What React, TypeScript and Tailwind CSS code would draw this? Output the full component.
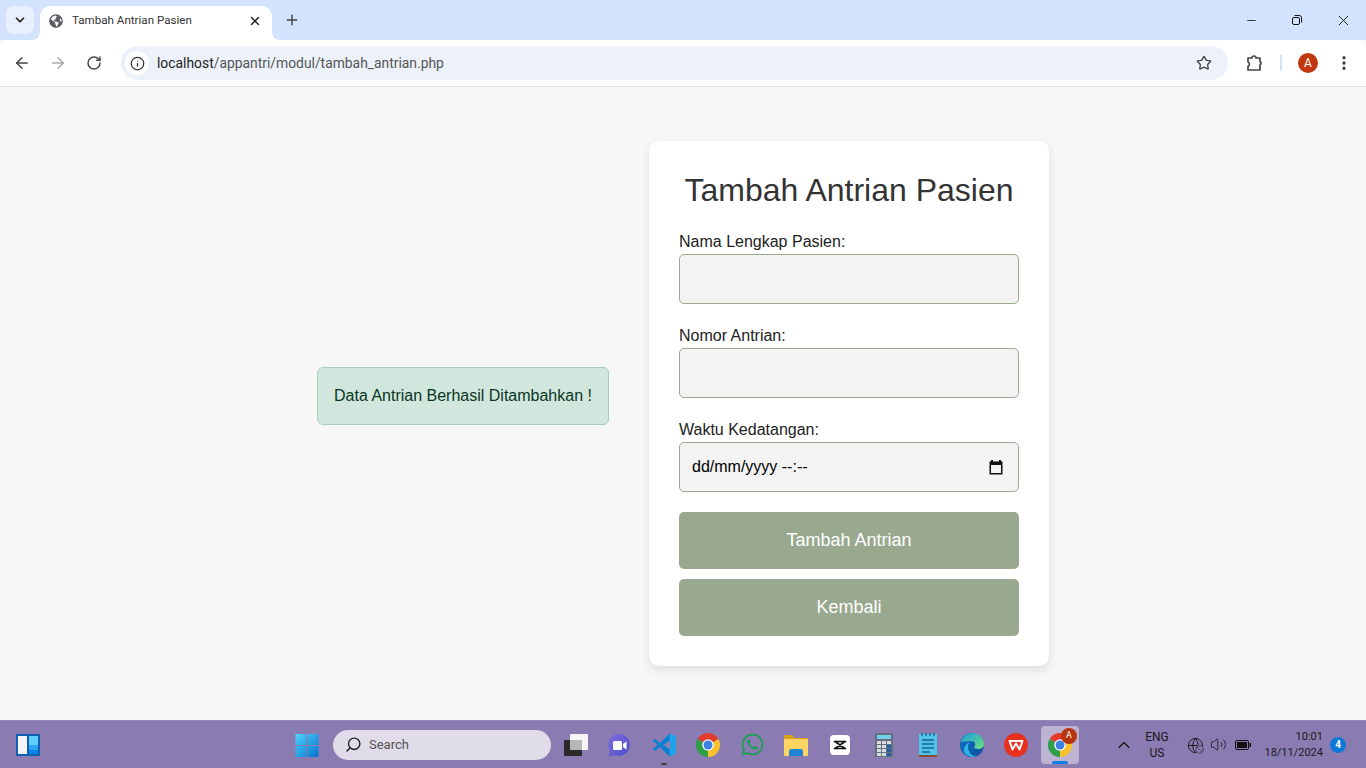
import React from 'react';
import { ArrowLeft, ArrowRight, RotateCw, Star, X, Plus, ChevronDown, ChevronUp, EllipsisVertical, Info, Minus, Volume2, Search, Globe, Ban } from 'lucide-react';
import { FaGlobeAmericas, FaWhatsapp } from 'react-icons/fa';

const uiFont = 'font-["Roboto",sans-serif]';

const ChromeIcon: React.FC = () => (
  <svg width="24" height="24" viewBox="0 0 24 24">
    <path d="M12 12 L1.6 6 A12 12 0 0 1 22.4 6 Z" fill="#e33b2e" />
    <path d="M12 12 L22.4 6 A12 12 0 0 1 12 24 Z" fill="#fbc02d" />
    <path d="M12 12 L12 24 A12 12 0 0 1 1.6 6 Z" fill="#2f9e48" />
    <circle cx="12" cy="12" r="5.8" fill="#fff" />
    <circle cx="12" cy="12" r="4.5" fill="#3b82e6" />
  </svg>
);

const WindowsLogo: React.FC = () => (
  <svg width="24" height="24" viewBox="0 0 24 24">
    <defs>
      <linearGradient id="winGrad" x1="0" y1="0" x2="1" y2="1">
        <stop offset="0" stopColor="#4fd2fb" />
        <stop offset="1" stopColor="#0573d0" />
      </linearGradient>
    </defs>
    <path d="M0.5 1h11v11h-11zM12.500 1h11v11h-11zM0.500 13h11v11h-11zM12.500 13h11v11h-11z" fill="url(#winGrad)" />
  </svg>
);

const WidgetsIcon: React.FC = () => (
  <svg width="24" height="22" viewBox="0 0 24 22">
    <rect width="24" height="22" fill="#0f5fb0" />
    <rect x="2" y="2" width="9" height="18" fill="#f4f4f4" />
    <rect x="13" y="2" width="9" height="9" fill="#5fcdfd" />
    <rect x="13" y="11" width="9" height="5" fill="#2aa5f5" />
    <rect x="13" y="16" width="9" height="4" fill="#0a84ea" />
  </svg>
);

const TaskViewIcon: React.FC = () => (
  <svg width="24" height="22" viewBox="0 0 24 22">
    <rect x="6" y="0" width="18" height="16" rx="1" fill="#f5f5f5" />
    <rect x="0" y="6" width="18" height="16" rx="1" fill="#2a2a2a" />
    <rect x="6" y="6" width="12" height="10" fill="#b9b6b8" />
  </svg>
);

const MeetIcon: React.FC = () => (
  <svg width="24" height="24" viewBox="2 0 24 24">
    <defs>
      <linearGradient id="meetGrad" x1="0" y1="0" x2="1" y2="1">
        <stop offset="0" stopColor="#7b6be0" />
        <stop offset="1" stopColor="#4f4fc4" />
      </linearGradient>
    </defs>
    <path d="M13 1a11 11 0 1 1-4.500 21l-6 1.500 1.500-5.500A11 11 0 0 1 13 1z" fill="url(#meetGrad)" />
    <rect x="7" y="8" width="9" height="9" rx="1.500" fill="#fff" />
    <path d="M17 11l3.500-2.500v8L17 14z" fill="#fff" />
  </svg>
);

const VsCodeIcon: React.FC = () => (
  <svg width="24" height="24" viewBox="0 0 24 24">
    <path d="M17.500 0.500L8 10 3 6 0.500 7.500 5.500 12 0.500 16.500 3 18l5-4 9.500 9.500L24 20.500V3.500z" fill="#0a7fd0" />
    <path d="M17.500 0.500L24 3.500v17l-6.500 3z" fill="#21a3ea" />
    <path d="M18 7.500L11.500 12l6.500 4.500z" fill="#8f80b4" />
  </svg>
);

const FilesIcon: React.FC = () => (
  <svg width="24" height="22" viewBox="0 0 24 22">
    <path d="M0 2a1 1 0 0 1 1-1h7l3 3h12a1 1 0 0 1 1 1v3H0z" fill="#d9a21b" />
    <path d="M0 5h24v16a1 1 0 0 1-1 1H1a1 1 0 0 1-1-1z" fill="#fcd462" />
    <path d="M5 17a2 2 0 0 1 2-2h10a2 2 0 0 1 2 2v5H5z" fill="#1f84d6" />
  </svg>
);

const CapCutIcon: React.FC = () => (
  <svg width="20" height="20" viewBox="0 0 20 20">
    <rect width="20" height="20" rx="4" fill="#fff" />
    <path d="M4.500 6.500h11M4.500 13.500h11M5 6.500l10 7M15 6.500l-10 7" stroke="#111" strokeWidth="1.700" strokeLinecap="round" fill="none" />
  </svg>
);

const CalcIcon: React.FC = () => (
  <svg width="18" height="24" viewBox="0 0 18 24">
    <rect width="18" height="24" rx="1" fill="#65707c" />
    <rect x="2" y="2" width="14" height="4" fill="#6fd0ee" />
    {[0, 1, 2].map(c => [0, 1, 2, 3].map(r => (
      <rect key={`${c}-${r}`} x={2 + c * 5} y={8 + r * 4} width="4" height="3" fill={c === 2 && r > 0 ? '#1d5fa8' : '#d9dde0'} />
    )))}
  </svg>
);

const NotepadIcon: React.FC = () => (
  <svg width="18" height="24" viewBox="0 0 18 24">
    <rect y="1" width="18" height="21" fill="#52c3e8" />
    <rect y="22" width="18" height="2" fill="#8a4b2a" />
    <path d="M3 0v3M7 0v3M11 0v3M15 0v3" stroke="#1c6f97" strokeWidth="1.500" />
    <path d="M3 7h12M3 11h12M3 15h12M3 19h8" stroke="#14698f" strokeWidth="1.500" />
  </svg>
);

const EdgeIcon: React.FC = () => (
  <svg width="24" height="24" viewBox="0 0 24 24">
    <defs>
      <linearGradient id="edgeTop" x1="0" y1="0" x2="1" y2="1">
        <stop offset="0" stopColor="#1b9de2" />
        <stop offset="1" stopColor="#6ee07a" />
      </linearGradient>
      <linearGradient id="edgeBot" x1="0" y1="0" x2="1" y2="1">
        <stop offset="0" stopColor="#0e6fc4" />
        <stop offset="1" stopColor="#0b4e9e" />
      </linearGradient>
    </defs>
    <circle cx="12" cy="12" r="12" fill="url(#edgeBot)" />
    <path d="M1 9C3 3 8 0 12 0c7 0 12 5 12 11 0 4-3 5-6 5-2 0-4-1-4-2 2-1 2-6-3-6-4 0-7 1-10 1z" fill="url(#edgeTop)" />
    <path d="M11 9c-3 1-4 5-2 9 1 3 4 5 8 5-5 2-11 0-13-4-1-4 2-9 7-10z" fill="#2bb3e6" />
  </svg>
);

const WpsIcon: React.FC = () => (
  <svg width="24" height="24" viewBox="0 0 24 24">
    <circle cx="12" cy="12" r="12" fill="#e8301e" />
    <path d="M5.500 8h13l-3 8.500-3.500-6-3.500 6z" fill="none" stroke="#fff" strokeWidth="2" strokeLinejoin="round" />
  </svg>
);

const BatteryIcon: React.FC = () => (
  <svg width="16" height="10" viewBox="0 0 16 10">
    <rect x="0.500" y="0.500" width="13" height="9" rx="1.500" fill="none" stroke="#111" />
    <rect x="2" y="2" width="10" height="6" fill="#111" />
    <rect x="14.500" y="3" width="1.500" height="4" fill="#111" />
  </svg>
);

const ExtensionIcon: React.FC = () => (
  <svg width="18" height="18" viewBox="0 0 18 18" fill="none" stroke="#444" strokeWidth="1.700" strokeLinejoin="round">
    <path d="M2 4h4a2 2 0 0 1 4 0h4v3.500a2 2 0 0 1 0 3.500V16H2v-3.500a2.500 2.500 0 0 0 0-4.500z" />
  </svg>
);

const TaskSlot: React.FC<{ children: React.ReactNode; underline?: boolean }> = ({ children, underline }) => (
  <div className="relative flex h-full w-[44px] items-center justify-center">
    {children}
    {underline && <span className="absolute bottom-[3px] h-[2px] w-[6px] rounded-full bg-[#444]" />}
  </div>
);

const Field: React.FC<{ label: string; gap: string; children?: React.ReactNode }> = ({ label, gap, children }) => (
  <div className={`flex flex-col ${gap}`}>
    <label className="mb-[3px] mt-px text-base leading-[18px] text-[#222]">{label}</label>
    <div className="flex h-[50px] items-center justify-between rounded-[5px] border border-[#99a98f] bg-[#f3f3f3] pl-3 pr-[14px]">
      {children}
    </div>
  </div>
);

export default function App() {
  return (
    <div className="flex h-screen w-full flex-col overflow-hidden bg-[#f7f7f7] font-['Liberation_Sans',sans-serif]">
      {/* tab strip */}
      <div className={`flex h-10 items-end bg-[#d3e3fd] ${uiFont}`}>
        <div className="mb-[6px] ml-[6px] flex h-7 w-7 items-center justify-center rounded-lg bg-[#e8f0fd]">
          <ChevronDown size={14} strokeWidth={3} className="text-[#222]" />
        </div>
        <div className="relative ml-[6px] flex h-[34px] w-[232px] items-center rounded-t-[10px] bg-white pb-[5px] pl-[9px] pr-[10px]">
          <svg className="absolute -left-2 bottom-0" width="8" height="8" viewBox="0 0 8 8"><path d="M8 0v8H0a8 8 0 0 0 8-8z" fill="#fff" /></svg>
          <svg className="absolute -right-2 bottom-0" width="8" height="8" viewBox="0 0 8 8"><path d="M0 0v8h8a8 8 0 0 1-8-8z" fill="#fff" /></svg>
          <FaGlobeAmericas size={14} className="text-[#5a5e63]" />
          <span className="ml-[9px] flex-1 text-[11.6px] text-[#333]">Tambah Antrian Pasien</span>
          <X size={14} strokeWidth={2.5} className="text-[#222]" />
        </div>
        <div className="mb-[6px] ml-[6px] flex h-7 w-7 items-center justify-center">
          <Plus size={16} strokeWidth={2.2} className="text-[#444]" />
        </div>
        <div className="mb-[6px] ml-auto flex h-7 items-center text-[#111]">
          <div className="flex w-[46px] justify-center"><Minus size={13} strokeWidth={1.5} /></div>
          <div className="relative flex w-[46px] justify-center">
            <svg width="12" height="12" viewBox="0 0 12 12" fill="none" stroke="#111">
              <rect x="1.500" y="3.500" width="7" height="7" rx="1.500" />
              <path d="M3.500 1.500h5a2 2 0 0 1 2 2v5" />
            </svg>
          </div>
          <div className="flex w-[46px] justify-center"><X size={17} strokeWidth={1.3} /></div>
        </div>
      </div>

      {/* toolbar */}
      <div className={`flex h-[47px] items-center rounded-t-[8px] border-b border-[#dfe1e5] bg-white ${uiFont}`}>
        <div className="flex w-[113px] items-center pl-[13px] text-[#444]">
          <ArrowLeft size={18} strokeWidth={2} />
          <ArrowRight size={18} strokeWidth={2} className="ml-[18px] text-[#aaa]" />
          <RotateCw size={16} strokeWidth={2.2} className="ml-[19px]" />
        </div>
        <div className="ml-2 flex h-[34px] w-[1107px] items-center rounded-full bg-[#edf2fa] pl-1 pr-[16px]">
          <div className="flex h-6 w-6 items-center justify-center rounded-full bg-white">
            <Info size={15} strokeWidth={2} className="text-[#333]" />
          </div>
          <span className="ml-2 flex-1 text-[13.86px] text-[#555]">
            <span className="text-[#222]">localhost</span>/appantri/modul/tambah_antrian.php
          </span>
          <Star size={16} strokeWidth={2} className="text-[#444]" />
        </div>
        <div className="ml-[18px]"><ExtensionIcon /></div>
        <span className="ml-4 h-[16px] w-[2px] bg-[#d3e3fd]" />
        <div className="ml-4 flex h-5 w-5 items-center justify-center rounded-full bg-[#c1370f] text-xs text-white">A</div>
        <EllipsisVertical size={18} strokeWidth={2.4} className="ml-[17px] text-[#444]" />
      </div>

      {/* page */}
      <main className="flex flex-1 items-center justify-center gap-10">
        <div className="mb-[15px] flex h-[58px] w-[292px] items-center justify-center rounded-[6px] border border-[#a3cfbb] bg-[#d1e7dd] text-base text-[#0a3622]">
          Data Antrian Berhasil Ditambahkan !
        </div>
        <div className="flex w-[400px] flex-col rounded-[10px] bg-white p-[30px] shadow-[0_4px_10px_rgba(0,0,0,0.1)]">
          <h2 className="mb-[23px] mt-px text-center text-[32px] leading-[37px] text-[#333]">Tambah Antrian Pasien</h2>
          <Field label="Nama Lengkap Pasien:" gap="mb-[22px]" />
          <Field label="Nomor Antrian:" gap="mb-[22px]" />
          <Field label="Waktu Kedatangan:" gap="mb-5">
            <span className="text-base text-black">dd/mm/yyyy --:--</span>
            <svg width="16" height="16" viewBox="0 0 16 16">
              <path d="M3 1h2v1.500h6V1h2v1.500h1.500v13h-13v-13H3zM3 6v8h10V6z" fill="#111" />
            </svg>
          </Field>
          <button className="mb-[10px] h-[57px] rounded-[5px] bg-[#99a98f] pb-[2px] text-lg text-white">Tambah Antrian</button>
          <button className="h-[57px] rounded-[5px] bg-[#99a98f] pb-[2px] text-lg text-white">Kembali</button>
        </div>
      </main>

      {/* taskbar */}
      <footer className={`flex h-12 items-center border-t border-[#9488b8] bg-[#8a7cb2] text-[#1a1a1a] ${uiFont}`}>
        <div className="ml-4 mr-[245px] flex w-6 items-center"><WidgetsIcon /></div>
        <TaskSlot><WindowsLogo /></TaskSlot>
        <div className="ml-1 mr-[3px] flex h-[30px] w-[218px] items-center rounded-full bg-[#e0dcea] pl-3 text-[13px] text-[#555]">
          <Search size={17} strokeWidth={2} className="-scale-x-100 text-[#222]" />
          <span className="ml-[7px]">Search</span>
        </div>
        <TaskSlot><TaskViewIcon /></TaskSlot>
        <TaskSlot><MeetIcon /></TaskSlot>
        <TaskSlot underline><VsCodeIcon /></TaskSlot>
        <TaskSlot><ChromeIcon /></TaskSlot>
        <TaskSlot><FaWhatsapp size={25} className="text-[#1f9d57]" /></TaskSlot>
        <TaskSlot><FilesIcon /></TaskSlot>
        <TaskSlot><CapCutIcon /></TaskSlot>
        <TaskSlot><CalcIcon /></TaskSlot>
        <TaskSlot><NotepadIcon /></TaskSlot>
        <TaskSlot><EdgeIcon /></TaskSlot>
        <TaskSlot><WpsIcon /></TaskSlot>
        <TaskSlot>
          <div className="relative flex h-[38px] w-[38px] items-center justify-center rounded-[4px] bg-[#bcb3d3]">
            <ChromeIcon />
            <span className="absolute right-[2px] top-[2px] flex h-4 w-4 items-center justify-center rounded-full bg-[#b8360f] text-[9px] text-white">A</span>
            <span className="absolute bottom-0 h-[3px] w-[16px] rounded-full bg-[#0f7fe0]" />
          </div>
        </TaskSlot>
        <ChevronUp size={20} strokeWidth={1.6} className="ml-[32px]" />
        <div className="ml-[5px] flex w-[36px] flex-col items-center text-xs leading-[16px]">
          <span>ENG</span>
          <span>US</span>
        </div>
        <div className="relative ml-[12px] h-4 w-4">
          <Globe size={17} strokeWidth={1.4} />
          <Ban size={9} strokeWidth={1.4} className="absolute -bottom-[1px] -right-[1px] rounded-full bg-[#8a7cb2]" />
        </div>
        <Volume2 size={17} strokeWidth={1.2} className="ml-[7px]" />
        <div className="ml-[8px]"><BatteryIcon /></div>
        <div className="ml-[6px] flex w-[66px] flex-col items-end text-[11px] leading-[16px]">
          <span>10:01</span>
          <span>18/11/2024</span>
        </div>
        <div className="ml-[7px] flex h-4 w-4 items-center justify-center rounded-full bg-[#0a78d4] text-[10px] font-bold text-white">4</div>
      </footer>
    </div>
  );
}
